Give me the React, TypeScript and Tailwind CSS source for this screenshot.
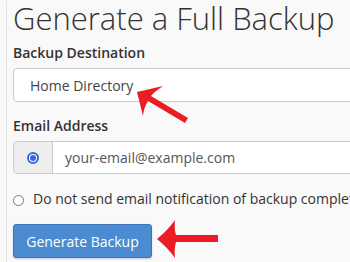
import React from "react";

function ArrowUpLeft() {
  // arrow pointing to the destination select
  return (
    <svg className="absolute left-[130px] top-[82px]" width="64" height="44" viewBox="0 0 64 44">
      <path d="M7 10 L33 4 Q24 10 21 14 L58 36 L55 41 L18 19 Q14 25 13 34 Z" fill="#ec1c24" />
    </svg>
  );
}

function ArrowLeft() {
  return (
    <svg className="absolute left-[154px] top-[218px]" width="68" height="42" viewBox="0 0 68 42">
      <path d="M3 21 Q14 12 21 2 Q20 11 22 17 L64 17 L64 24 L22 24 Q20 31 21 40 Q14 30 3 21 Z" fill="#ec1c24" />
    </svg>
  );
}

export default function App() {
  return (
    <div
      className="relative h-[262px] w-[350px] overflow-hidden bg-[#f9f9f9] pl-[6px] text-[#333]"
      style={{ fontFamily: '"Open Sans", "Noto Sans", sans-serif' }}
    >
      <div className="h-full border-l border-[#e3e3e3] pl-[6px]">
        <h1 className="mt-[1px] whitespace-nowrap text-[31px] font-light leading-[35px]">
          Generate a Full Backup
        </h1>

        <div className="mt-[7px] text-[14px] font-semibold leading-[20px]">Backup Destination</div>
        <div className="mt-[5px] flex h-[34px] w-[400px] items-center rounded-[4px] border border-[#ccc] bg-white pl-[16px] text-[14px] text-[#444]">
          Home Directory
        </div>

        <div className="mt-[14px] text-[14px] font-semibold leading-[20px]">Email Address</div>
        <div className="mt-[5px] flex h-[33px] w-[400px] rounded-[4px] border border-[#ccc] bg-white">
          <div className="flex w-[39px] items-center justify-center rounded-l-[4px] border-r border-[#ccc] bg-[#eee]">
            <span className="flex h-[12px] w-[12px] items-center justify-center rounded-full border-[2px] border-[#3567d6] bg-white">
              <span className="h-[6px] w-[6px] rounded-full bg-[#3567d6]" />
            </span>
          </div>
          <div className="flex items-center pl-[12px] text-[14px] text-[#555]">your-email@example.com</div>
        </div>

        <div className="mt-[15px] flex items-center whitespace-nowrap text-[14px] leading-[20px]">
          <span className="mr-[9px] mt-[2px] h-[11px] w-[11px] shrink-0 rounded-full border border-[#777] bg-white" />
          Do not send email notification of backup completion.
        </div>

        <button className="mt-[15px] flex h-[34px] w-[139px] items-center justify-center rounded-[3px] border border-[#3c74ba] bg-[#4a8bd2] text-[14px] text-white shadow-[0_1px_2px_rgba(0,0,0,0.2)]">
          Generate Backup
        </button>
      </div>
      <ArrowUpLeft />
      <ArrowLeft />
    </div>
  );
}
